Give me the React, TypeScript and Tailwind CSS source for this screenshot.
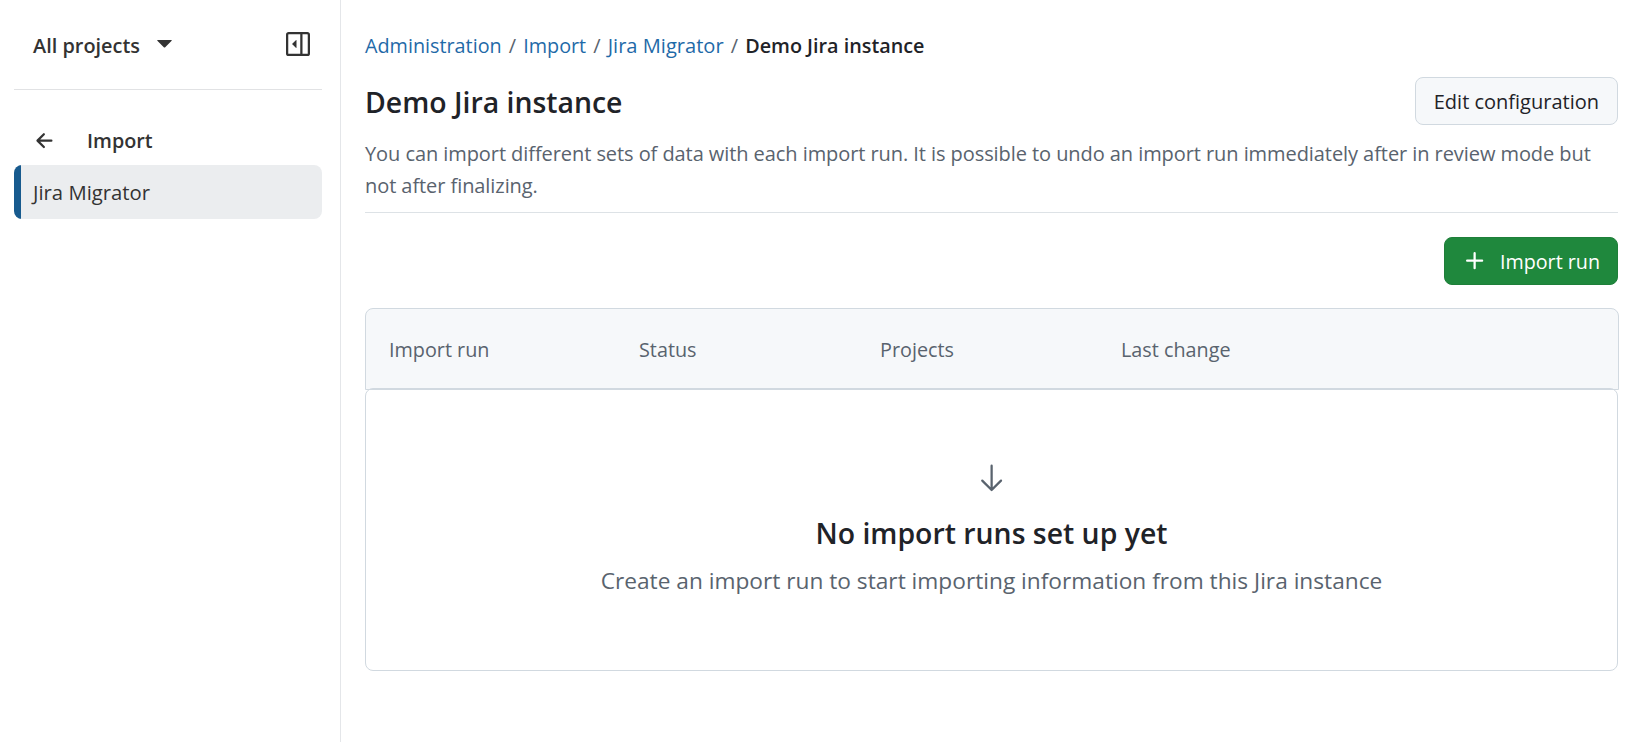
import React from 'react';

const ArrowLeftIcon = () => (
  <svg width="24" height="24" viewBox="0 0 16 16" fill="currentColor">
    <path d="M7.78 12.53a.75.75 0 0 1-1.06 0L2.47 8.28a.75.75 0 0 1 0-1.06l4.25-4.25a.751.751 0 0 1 1.042.018.751.751 0 0 1 .018 1.042L4.81 7h7.44a.75.75 0 0 1 0 1.5H4.81l2.97 2.97a.75.75 0 0 1 0 1.06Z" />
  </svg>
);

const SidebarIcon = () => (
  <svg width="24" height="24" viewBox="0 0 16 16" fill="currentColor">
    <path d="m4.177 7.823 2.396-2.396A.25.25 0 0 1 7 5.604v4.792a.25.25 0 0 1-.427.177L4.177 8.177a.25.25 0 0 1 0-.354Z" />
    <path d="M0 1.75C0 .784.784 0 1.75 0h12.5C15.216 0 16 .784 16 1.75v12.5A1.75 1.75 0 0 1 14.25 16H1.75A1.75 1.75 0 0 1 0 14.25Zm1.75-.25a.25.25 0 0 0-.25.25v12.5c0 .138.112.25.25.25H9.5v-13Zm12.5 13a.25.25 0 0 0 .25-.25V1.75a.25.25 0 0 0-.25-.25H11v13Z" />
  </svg>
);

const PlusIcon = () => (
  <svg width="24" height="24" viewBox="0 0 16 16" fill="currentColor">
    <path d="M7.75 2a.75.75 0 0 1 .75.75V7h4.25a.75.75 0 0 1 0 1.5H8.5v4.25a.75.75 0 0 1-1.5 0V8.5H2.75a.75.75 0 0 1 0-1.5H7V2.75A.75.75 0 0 1 7.75 2Z" />
  </svg>
);

const ArrowDownIcon = () => (
  <svg width="36" height="36" viewBox="0 0 24 24" fill="currentColor">
    <path d="M4.97 13.22a.75.75 0 0 1 1.06 0L11 18.19V3.75a.75.75 0 0 1 1.5 0v14.44l4.97-4.97a.749.749 0 0 1 1.275.326.749.749 0 0 1-.215.734l-6.25 6.25a.75.75 0 0 1-1.06 0l-6.25-6.25a.75.75 0 0 1 0-1.06Z" />
  </svg>
);

const breadcrumbs = ['Administration', 'Import', 'Jira Migrator'];

const Sidebar = () => (
  <aside className="w-[341px] shrink-0 border-r border-[#e4e6e9] pl-3.5 pr-[18px] text-[#333333]">
    <div className="flex h-[90px] items-center justify-between border-b border-[#e1e2e4] pb-px pl-[19px] pr-3">
      <button className="flex items-center gap-[17px] text-[19.9px] font-semibold">
        <span className="pt-[3px]">All projects</span>
        <svg width="15" height="8" viewBox="0 0 15 8" fill="currentColor">
          <path d="M.7 0h13.6a.5.5 0 0 1 .35.85L8.2 7.2a1 1 0 0 1-1.4 0L.35.85A.5.5 0 0 1 .7 0Z" />
        </svg>
      </button>
      <button>
        <SidebarIcon />
      </button>
    </div>

    <div className="mt-[26px] flex h-[49px] items-center pl-[19px]">
      <ArrowLeftIcon />
      <span className="pl-[30px] pt-px text-[19.8px] font-semibold">Import</span>
    </div>
    <a className="flex h-[54px] items-center overflow-hidden rounded-lg bg-[#ebedef] text-[20.3px]">
      <span className="h-full w-[7px] bg-[#175a8e]" />
      <span className="pl-3 pt-px">Jira Migrator</span>
    </a>
  </aside>
);

const EmptyState = () => (
  <div className="-mt-0.5 flex h-[283px] flex-col items-center rounded-lg border border-[#d1d9e0] pt-[71px]">
    <span className="text-[#59636e]">
      <ArrowDownIcon />
    </span>
    <h2 className="mt-4 text-[28.4px] font-semibold leading-[42px] text-[#1f2328]">
      No import runs set up yet
    </h2>
    <p className="mt-[9px] text-[22.7px] leading-9 text-[#59636e]">
      Create an import run to start importing information from this Jira instance
    </p>
  </div>
);

const App = () => {
  return (
    <div className="flex h-screen overflow-hidden bg-white font-['Open_Sans','Noto_Sans',sans-serif] text-[20px]">
      <Sidebar />

      <main className="min-w-0 flex-1 pl-6 pr-5 pt-[31px] text-[#1f2328]">
        <nav className="flex h-[30px] items-baseline text-[19.8px] leading-[30px]">
          {breadcrumbs.map((item) => (
            <React.Fragment key={item}>
              <a className="text-[#1f6aa8] last-of-type:text-[20.1px]">{item}</a>
              <span className="w-[21.5px] text-center text-[20px] text-[#59636e]">/</span>
            </React.Fragment>
          ))}
          <span className="font-semibold">Demo Jira instance</span>
        </nav>

        <div className="mt-4 flex h-12 items-center justify-between">
          <h1 className="pt-0.5 text-[28.4px] font-semibold leading-[42px]">Demo Jira instance</h1>
          <button className="h-12 rounded-lg border border-[#d1d9e0] bg-[#f6f8fa] px-[18px] pt-0.5">
            Edit configuration
          </button>
        </div>
        <p className="mt-[13px] border-b border-[#dde2e6] pb-2.5 leading-8 tracking-[-0.07px] text-[#59636e]">
          You can import different sets of data with each import run. It is possible to undo an import run
          immediately after in review mode but not after finalizing.
        </p>

        <div className="mt-6 flex justify-end">
          <button className="flex h-12 w-[174px] items-center justify-between rounded-lg border border-[#1f7f3a] bg-[#1f883d] pl-[18px] pr-[17px] text-[19.7px] text-white">
            <PlusIcon />
            <span className="pt-0.5">Import run</span>
          </button>
        </div>

        <div className="-mr-px mt-[23px] grid h-[82px] grid-cols-[250px_241px_241px_1fr] items-center rounded-t-lg border border-[#d1d9e0] bg-[#f6f8fa] pl-[23px] pt-0.5 text-[19.8px] text-[#59636e]">
          <span>Import run</span>
          <span>Status</span>
          <span>Projects</span>
          <span>Last change</span>
        </div>
        <EmptyState />
      </main>
    </div>
  );
};

export default App;
